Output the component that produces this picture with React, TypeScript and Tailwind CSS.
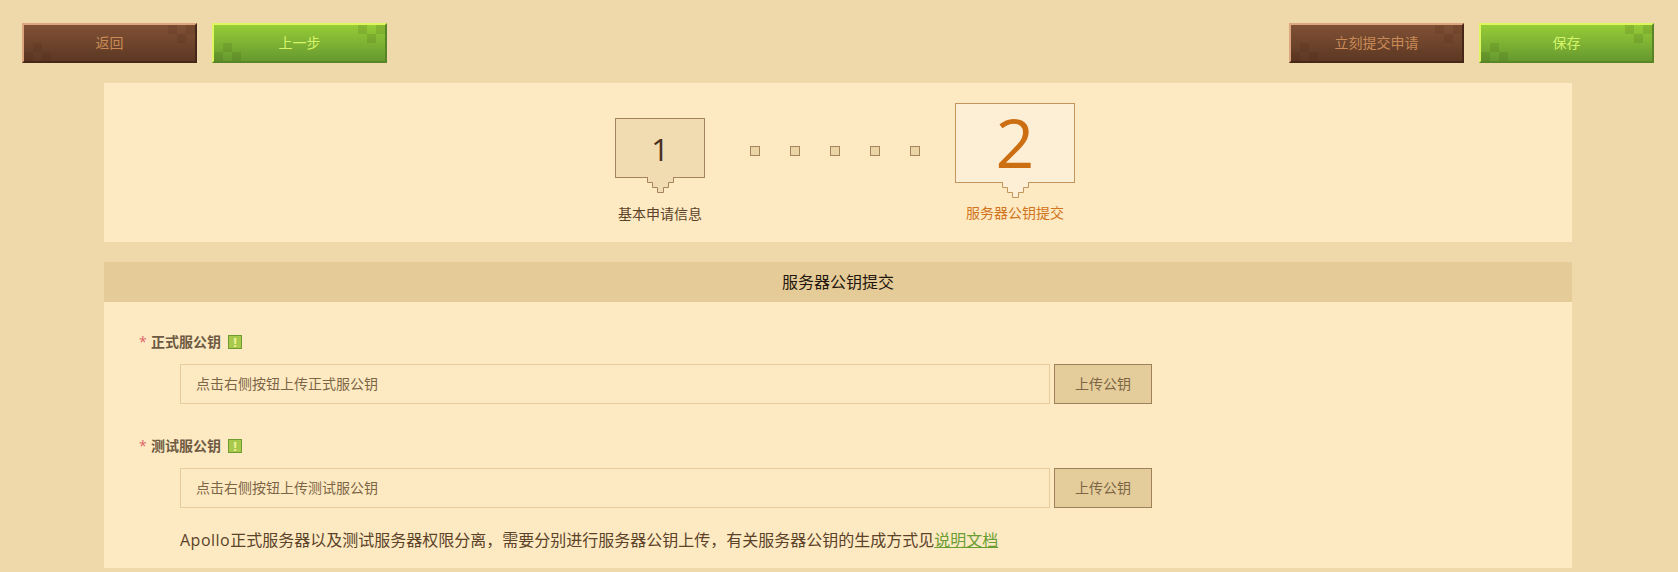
import React from 'react';

const FONT = "font-['Open_Sans','Noto_Sans_CJK_SC',sans-serif]";

// checker squares in the corners of the top buttons
const Pixels = ({ fill }: { fill: string }) => (
  <svg className="absolute -left-[2px] -top-[2px] pointer-events-none" width="175" height="40" viewBox="0 0 175 40">
    <g fill={fill}>
      <rect x="146" y="2" width="9" height="9" />
      <rect x="164" y="2" width="9" height="9" />
      <rect x="155" y="11" width="9" height="9" />
      <rect x="11" y="20" width="9" height="9" />
      <rect x="2" y="29" width="9" height="9" />
      <rect x="20" y="29" width="9" height="9" />
    </g>
  </svg>
);

const BrownButton = ({ children }: { children: React.ReactNode }) => (
  <button className="relative w-[175px] h-10 border-2 border-t-[#dca77e] border-l-[#dca77e] border-r-[#47271a] border-b-[#47271a] bg-gradient-to-b from-[#805136] to-[#5d3823] text-[#c98a55] text-sm">
    <Pixels fill="rgba(70,35,15,0.14)" />
    <span className="relative">{children}</span>
  </button>
);

const GreenButton = ({ children }: { children: React.ReactNode }) => (
  <button className="relative w-[175px] h-10 border-2 border-t-[#dff75e] border-l-[#dff75e] border-r-[#588526] border-b-[#588526] bg-gradient-to-b from-[#97cc37] to-[#66992f] text-[#d6f46a] text-sm">
    <Pixels fill="rgba(60,90,20,0.16)" />
    <span className="relative">{children}</span>
  </button>
);

const Pointer = ({ fill, stroke, className }: { fill: string; stroke: string; className: string }) => (
  <svg className={className} width="27" height="16" viewBox="0 0 27 16">
    <path
      d="M0.5 0 V5.5 H5.5 V10.5 H10.5 V15.5 H16.5 V10.5 H21.5 V5.5 H26.5 V0"
      fill={fill}
      stroke={stroke}
      strokeWidth="1"
    />
  </svg>
);

const Dot = () => <div className="w-[10px] h-[10px] border border-[#a5835e] bg-[#ecd5a5]" />;

const Field = ({ label, placeholder }: { label: string; placeholder: string }) => (
  <div>
    <div className="flex items-center h-[14px] pl-[35px] text-sm font-bold text-[#6e5a42]">
      <span className="w-3 text-[#e0656a] font-normal">*</span>
      <span>{label}</span>
      <span className="ml-[7px] flex items-center justify-center w-[14px] h-[14px] border border-[#6f9a2f] bg-[#a9c94c] text-[#eef59a] text-[13px] leading-none">
        !
      </span>
    </div>
    <div className="flex gap-[4px] mt-[15px] pl-[76px]">
      <input
        readOnly
        placeholder={placeholder}
        className="w-[870px] h-10 px-[15px] pb-[2px] border border-[#e5cc9a] bg-[#fdeac3] text-sm placeholder:text-[#7d6646] outline-none"
      />
      <button className="w-[98px] h-10 border border-[#a07f5c] bg-[#e5cd9b] text-sm text-[#7d6646]">上传公钥</button>
    </div>
  </div>
);

export default function App() {
  return (
    <div className={`${FONT} h-[572px] overflow-hidden bg-[#efd9ab]`}>
      {/* Top bar */}
      <div className="flex justify-between pr-[24px] pt-[23px] pl-[22px]">
        <div className="flex gap-[15px]">
          <BrownButton>返回</BrownButton>
          <GreenButton>上一步</GreenButton>
        </div>
        <div className="flex gap-[15px]">
          <BrownButton>立刻提交申请</BrownButton>
          <GreenButton>保存</GreenButton>
        </div>
      </div>

      <div className="ml-[104px] mr-[106px] mt-[20px]">
        {/* Steps */}
        <div className="h-[159px] bg-[#fdeac3] flex justify-center pt-[20px] pl-[14px]">
          <div className="flex flex-col items-center w-[90px] pt-[15px]">
            <div className="relative w-[90px] h-[60px] border border-[#a5835e] bg-[#f1dcb1] flex items-center justify-center text-[31px] text-[#4a3020]">
              <span className="relative top-[1px]">1</span>
              <Pointer fill="#f1dcb1" stroke="#a5835e" className="absolute left-[31px] top-[58px]" />
            </div>
            <div className="mt-[26px] whitespace-nowrap text-sm leading-5 text-[#5c4228]">基本申请信息</div>
          </div>
          <div className="flex gap-[30px] pt-[43px] ml-[45px] mr-[35px]">
            <Dot />
            <Dot />
            <Dot />
            <Dot />
            <Dot />
          </div>
          <div className="flex flex-col items-center w-[120px]">
            <div className="relative w-[120px] h-[80px] border border-[#c2965c] bg-[#fcefd6] flex items-center justify-center text-[68px] text-[#cc6e12]">
              <span className="relative -top-[1px]">2</span>
              <Pointer fill="#fcefd6" stroke="#c2965c" className="absolute left-[46px] top-[78px]" />
            </div>
            <div className="mt-[20px] whitespace-nowrap text-sm leading-5 text-[#d07420]">服务器公钥提交</div>
          </div>
        </div>

        {/* Form section */}
        <div className="mt-[20px] h-[306px] bg-[#fdeac3]">
          <div className="h-10 bg-[#e5cb97] flex items-center justify-center text-base text-[#1f170e]">服务器公钥提交</div>
          <div className="pt-[33px] flex flex-col gap-[35px]">
            <Field label="正式服公钥" placeholder="点击右侧按钮上传正式服公钥" />
            <div>
              <Field label="测试服公钥" placeholder="点击右侧按钮上传测试服公钥" />
              <p className="mt-[20px] pl-[76px] text-base leading-6 text-[#5b4228]">
                <span className="tracking-[0.5px]">Apollo</span>正式服务器以及测试服务器权限分离，需要分别进行服务器公钥上传，有关服务器公钥的生成方式见
                <a href="#doc" className="text-[#6b9d34] underline">说明文档</a>
              </p>
            </div>
          </div>
        </div>
      </div>
    </div>
  );
}
